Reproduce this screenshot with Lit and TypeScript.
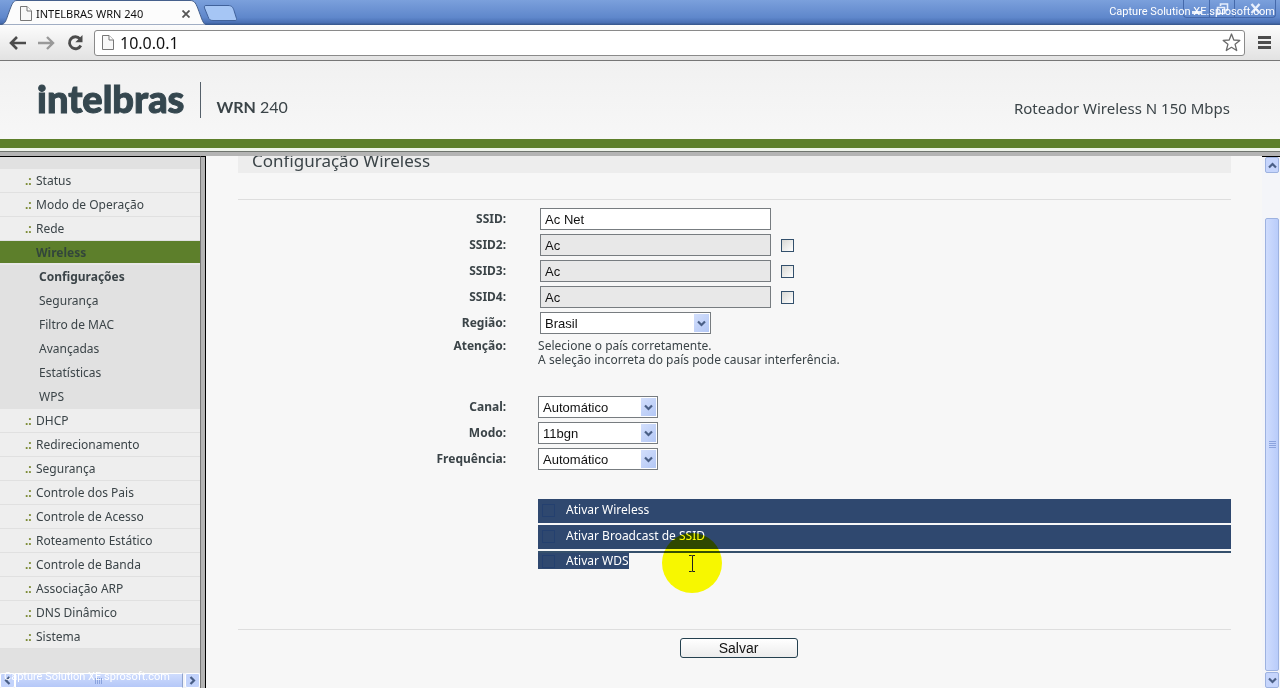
import { LitElement, html, css } from "lit";
import { customElement } from "lit/decorators.js";
import { classMap } from "lit/directives/class-map.js";

const SUB = ["Configurações", "Segurança", "Filtro de MAC", "Avançadas", "Estatísticas", "WPS"];
const TOP = ["Status", "Modo de Operação", "Rede"];
const REST = ["DHCP", "Redirecionamento", "Segurança", "Controle dos Pais", "Controle de Acesso", "Roteamento Estático", "Controle de Banda", "Associação ARP", "DNS Dinâmico", "Sistema"];

const pageIcon = html`<svg class="page" width="12" height="15" viewBox="0 0 12 15" aria-hidden="true">
  <path d="M.5.5h6.5l4.500 4.500v9.500H.5z" fill="#f8f8f8" stroke="#777" /><path d="M7 .5v4.500h4.500" fill="#fff" stroke="#777" /></svg>`;

const chevron = (d: string) => html`<svg width="9" height="9" viewBox="0 0 9 9" aria-hidden="true">
  <path d=${d} fill="none" stroke="#4a5f86" stroke-width="2.200" /></svg>`;
const DOWN = "M1 2.500 4.500 6 8 2.500";
const UP = "M1 6.500 4.500 3 8 6.500";
const LEFT = "M6.500 1 3 4.500 6.500 8";
const RIGHT = "M2.500 1 6 4.500 2.500 8";

@customElement("browser-bar")
export class BrowserBar extends LitElement {
  static styles = css`
    :host { display: block; font-family: "Noto Sans", sans-serif; }
    .title { display: flex; align-items: flex-start; height: 25px; background: linear-gradient(#7ba0dc, #5f87cb 70%, #4a70b4 90%, #345488); position: relative; }
    .tab { display: grid; width: 206px; height: 25px; }
    .tab > * { grid-area: 1 / 1; }
    .label { display: flex; align-items: center; padding: 2px 16px 0 20px; font-size: 11px; gap: 4px; color: #111; }
    .name { flex: 1; white-space: nowrap; }
    button { border: 0; padding: 0; background: none; display: flex; align-items: center; justify-content: center; }
    .new { margin: 5px 0 0 -3px; }
    .windows { display: flex; margin-left: auto; margin-right: 4px; height: 17px; border: 1px solid #4569aa; border-top: 0; border-radius: 0 0 4px 4px; }
    .windows button { width: 25px; }
    .windows button + button { border-left: 1px solid #4569aa; }
    .windows .close { width: 41px; }
    .mark { position: absolute; right: 5px; top: 4px; font: 11px/16px Roboto, sans-serif; color: #fff; }
    .tools { display: flex; align-items: center; height: 35px; padding: 0 8px 0 9px; background: linear-gradient(#fcfcfc, #e2e2e2); border-bottom: 1px solid #777; }
    .tools > button { width: 17px; margin-right: 12px; }
    .tools > .reload { margin-right: 10px; }
    .box { flex: 1; display: flex; align-items: center; height: 26px; border: 1px solid #8a8a8a; border-radius: 3px; background: #fff; box-sizing: border-box; padding: 0 3px 0 7px; gap: 6px; }
    input { flex: 1; border: 0; padding: 0; outline: 0; background: none; font: 16px "Noto Sans", sans-serif; color: #111; }
    .tools > .menu { margin: 0 0 0 13px; width: 14px; }
  `;
  render() {
    return html`
      <div class="title">
        <div class="tab">
          <svg width="206" height="25" viewBox="0 0 206 25" aria-hidden="true">
            <path d="M0 25C6 24 6 20 9 12S13 .5 17 .5H190c5 0 6 3 9 11s4 12 7 13.500z" fill="#fcfcfc" stroke="#46608c" /></svg>
          <div class="label">${pageIcon}<span class="name">INTELBRAS WRN 240</span>
            <button aria-label="Fechar guia"><svg width="8" height="8" viewBox="0 0 8 8"><path d="M.5.5l7 7M7.500.5l-7 7" stroke="#555" stroke-width="1.800" /></svg></button>
          </div>
        </div>
        <button class="new" aria-label="Nova guia"><svg width="34" height="16" viewBox="0 0 34 16"><path d="M3 .5h22c4 0 5 2 6 5l2.500 8c.5 1.500 0 2-1.500 2H10c-3 0-4-1-5-4L1.500 3C1 1.500 1.500.5 3 .5z" fill="#a6c6f5" stroke="#41629b" /></svg></button>
        <div class="windows">
          <button aria-label="Minimizar"><svg width="12" height="12" viewBox="0 0 12 12"><path d="M1 9.500h9" stroke="#e6eefc" stroke-width="3" /></svg></button>
          <button aria-label="Restaurar"><svg width="13" height="12" viewBox="0 0 13 12"><path d="M4.500 3V1h7v6h-2M1.500 4.500h7v6h-7z" fill="none" stroke="#e6eefc" stroke-width="1.600" /></svg></button>
          <button class="close" aria-label="Fechar"><svg width="11" height="11" viewBox="0 0 11 11"><path d="M1.500 1l8 9M9.500 1l-8 9" stroke="#e6eefc" stroke-width="2.400" /></svg></button>
        </div>
        <span class="mark">Capture Solution XE.sprosoft.com</span>
      </div>
      <div class="tools">
        <button aria-label="Voltar"><svg width="17" height="14" viewBox="0 0 17 14"><path d="M8 1 2 7l6 6M2 7h15" fill="none" stroke="#4c4c4c" stroke-width="2.600" /></svg></button>
        <button aria-label="Avançar"><svg width="17" height="14" viewBox="0 0 17 14"><path d="M9 1l6 6-6 6M15 7H0" fill="none" stroke="#999" stroke-width="2.400" /></svg></button>
        <button class="reload" aria-label="Recarregar"><svg width="17" height="16" viewBox="0 0 17 16"><path d="M13 3.800A6 6 0 1 0 13.800 10.500" fill="none" stroke="#4c4c4c" stroke-width="2.800" /><path d="M15.500 0v7.200H8.300z" fill="#4c4c4c" /></svg></button>
        <div class="box">${pageIcon}<input aria-label="Endereço" value="10.0.0.1" />
          <button aria-label="Favoritos"><svg width="19" height="19" viewBox="0 0 19 19"><path d="M9.500 1l2.300 6 6 .4-4.700 3.900 1.600 6.200-5.200-3.200-5.200 3.200 1.600-6.200L1.200 7.400l6-.4z" fill="#fff" stroke="#6a6a6a" stroke-width="1.300" stroke-linejoin="round" /></svg></button>
        </div>
        <button class="menu" aria-label="Menu"><svg width="14" height="13" viewBox="0 0 14 13"><path d="M0 1.500h13M0 6.500h13M0 11.500h13" stroke="#4c4c4c" stroke-width="3" /></svg></button>
      </div>`;
  }
}

@customElement("side-menu")
export class SideMenu extends LitElement {
  static styles = css`
    :host { display: flex; flex-direction: column; width: 200px; background: #e1e1e1; font: 12px/23px "Noto Sans", sans-serif; overflow: hidden; }
    ul { list-style: none; margin: 0; padding: 12px 0 0; flex: 1; }
    a { display: block; height: 23px; padding-left: 25px; border-bottom: 1px solid #e0e0e0; background: #eee; color: #3b4448; text-decoration: none; white-space: nowrap; }
    .dots { color: #7b8a33; font-weight: bold; display: inline-block; width: 11px; }
    .current { height: 22px; border-bottom: 2px solid #e8e8e8; background: #5d7f2b; color: #33463b; font-weight: bold; padding-left: 36px; }
    .sub { background: #e1e1e1; border-color: #e1e1e1; padding-left: 39px; }
    .on { font-weight: bold; }
    .bar { display: flex; height: 15px; background: #f1f2f8; position: relative; }
    .bar button { width: 15px; padding: 0; border: 1px solid #fff; border-radius: 2px; background: #c3d3fb; display: flex; align-items: center; justify-content: center; }
    .thumb { flex: 1; background: linear-gradient(#cfdcfd, #b5c8f8); border: 1px solid #fff; border-right-color: #8fa3cc; margin-right: 2px; display: flex; align-items: center; justify-content: center; }
    .mark { position: absolute; left: 4px; top: -4px; font: 11px/16px Roboto, sans-serif; color: #fff; white-space: nowrap; }
  `;
  private item(name: string) {
    return html`<li><a href="#"><span class="dots">.:</span>${name}</a></li>`;
  }
  render() {
    return html`<ul>
        ${TOP.map((n) => this.item(n))}
        <li><a class="current" href="#">Wireless</a></li>
        ${SUB.map((n, i) => html`<li><a class=${classMap({ sub: true, on: i === 0 })} href="#">${n}</a></li>`)}
        ${REST.map((n) => this.item(n))}
      </ul>
      <div class="bar">
        <button aria-label="Rolar à esquerda">${chevron(LEFT)}</button>
        <div class="thumb"><svg width="8" height="6" viewBox="0 0 8 6"><path d="M.5 0v6M2.500 0v6M4.500 0v6M6.500 0v6" stroke="#8ba3dd" /></svg></div>
        <button aria-label="Rolar à direita">${chevron(RIGHT)}</button>
        <span class="mark">Capture Solution XE.sprosoft.com</span>
      </div>`;
  }
}

@customElement("wireless-form")
export class WirelessForm extends LitElement {
  static styles = css`
    :host { display: block; flex: 1; min-width: 0; overflow: hidden; padding: 0 31px 0 32px; background: #f7f7f7; color: #3b4448; font: 12px/14px "Noto Sans", sans-serif; }
    h1 { margin: -8px 0 26px; padding-left: 14px; height: 25px; background: #ededed; font-size: 17px; line-height: 26px; font-weight: normal; }
    form { border-top: 1px solid #dedede; padding-top: 8px; }
    .row { display: grid; grid-template-columns: 27% 1fr; column-gap: 32px; align-items: center; margin-bottom: 4px; }
    .name { text-align: right; font-weight: bold; font-size: 12px; }
    .field { display: flex; align-items: center; gap: 10px; }
    .inset { padding-left: 2px; }
    .text { box-sizing: border-box; width: 231px; height: 22px; padding: 0 4px; border: 1px solid #777c80; background: #fff; font: 13px "Liberation Sans", sans-serif; color: #111; }
    .text:disabled { background: #e8e8e8; }
    .tick { appearance: none; box-sizing: border-box; width: 13px; height: 13px; margin: 0; border: 1px solid #33506c; background: linear-gradient(135deg, #d8d8d4, #fff); }
    .drop { display: grid; width: 120px; align-items: center; }
    .drop > * { grid-area: 1 / 1; }
    .wide { width: 171px; }
    select { appearance: none; box-sizing: border-box; width: 100%; height: 22px; padding: 0 4px; border: 1px solid #777c80; border-radius: 0; background: #fff; font: 13px "Liberation Sans", sans-serif; color: #111; }
    .arrow { justify-self: end; margin-right: 2px; width: 15px; height: 18px; background: linear-gradient(135deg, #d3dffc, #b3c7f5); display: flex; align-items: center; justify-content: center; pointer-events: none; }
    .note { align-items: start; margin: 5px 0 29px; }
    p { margin: 0; }
    .picks { margin: 29px 0 60px; padding-left: calc(27% + 32px); }
    .pick { display: flex; align-items: center; gap: 11px; height: 24px; box-sizing: border-box; padding: 0 4px 2px; margin-bottom: 2px; background: #2f486f; color: #fff; }
    .pick .tick { background: none; border-color: #24406f; }
    .last { border-top: 2px solid #35506c; height: 18px; background: none; padding: 0; margin: 0; }
    .last label { display: flex; align-items: center; gap: 11px; height: 16px; padding-left: 4px; background: #2f486f; }
    .end { border-top: 1px solid #dedede; padding: 8px 0 0 8px; text-align: center; }
    .save { width: 118px; height: 20px; padding: 0; border: 1px solid #24404f; border-radius: 3px; background: linear-gradient(#fff, #ececec); font: 14px "Liberation Sans", sans-serif; color: #111; }
  `;
  private select(id: string, label: string, value: string, wide = false) {
    return html`<div class="row"><label class="name" for=${id}>${label}</label>
      <div class=${classMap({ field: true, inset: wide })}><div class=${classMap({ drop: true, wide })}>
        <select id=${id}><option>${value}</option></select><span class="arrow">${chevron(DOWN)}</span></div></div></div>`;
  }
  render() {
    return html`<h1>Configuração Wireless</h1>
      <form @submit=${(e: Event) => e.preventDefault()}>
        <div class="row"><label class="name" for="s1">SSID:</label>
          <div class="field inset"><input class="text" id="s1" value="Ac Net" /></div></div>
        ${[2, 3, 4].map((n) => html`<div class="row"><label class="name" for="s${n}">SSID${n}:</label>
          <div class="field inset"><input class="text" id="s${n}" value="Ac" disabled /><input class="tick" type="checkbox" aria-label="Ativar SSID${n}" /></div></div>`)}
        ${this.select("region", "Região:", "Brasil", true)}
        <div class="row note"><span class="name">Atenção:</span>
          <p>Selecione o país corretamente.<br />A seleção incorreta do país pode causar interferência.</p></div>
        ${this.select("canal", "Canal:", "Automático")}
        ${this.select("modo", "Modo:", "11bgn")}
        ${this.select("freq", "Frequência:", "Automático")}
        <div class="picks">
          <label class="pick"><input class="tick" type="checkbox" />Ativar Wireless</label>
          <label class="pick"><input class="tick" type="checkbox" />Ativar Broadcast de SSID</label>
          <div class="pick last"><label><input class="tick" type="checkbox" />Ativar WDS</label></div>
        </div>
        <div class="end"><button class="save">Salvar</button></div>
      </form>`;
  }
}

@customElement("app-root")
export class AppRoot extends LitElement {
  static styles = css`
    :host { display: flex; flex-direction: column; height: 100vh; overflow: hidden; position: relative; background: #f7f7f7; }
    header { display: flex; align-items: flex-end; box-sizing: border-box; height: 78px; padding: 0 50px 21px 37px; background: linear-gradient(#f1f1f1, #f7f7f7); color: #3b4448; font-family: "Noto Sans", sans-serif; }
    .logo { font: 900 38px/40px Lato, sans-serif; color: #35474f; -webkit-text-stroke: 1px #35474f; }
    .model { margin-left: 16px; padding-left: 15px; border-left: 1px solid #55606a; height: 36px; font: 16px/50px Lato, sans-serif; }
    .product { margin-left: auto; font-size: 15px; line-height: 20px; }
    .green { height: 9px; background: #5d7f2b; border-bottom: 3px solid #eef3ea; }
    .edge { height: 4px; border-top: 1px solid #70756f; background: #b4b4b4; }
    .body { flex: 1; display: flex; min-height: 0; }
    side-menu { border-top: 1px solid #000; }
    .split { width: 4px; border: solid #000; border-width: 1px 1px 0 0; border-left: 1px solid #777; background: #b4b4b4; }
    .scroll { display: flex; flex-direction: column; width: 14px; padding: 0 1px 0 3px; border-top: 1px solid #000; background: #f4f5f9; }
    .scroll button { height: 16px; padding: 0; border: 1px solid #9db2e0; border-radius: 2px; background: #c6d5fc; display: flex; align-items: center; justify-content: center; }
    .thumb { flex: 1; margin: 45px 0 1px; border: 1px solid #9db2e0; border-radius: 2px; background: linear-gradient(90deg, #cfdcfd, #b9ccfa); display: flex; align-items: center; justify-content: center; }
    .pointer { position: absolute; left: 662px; top: 533px; mix-blend-mode: multiply; pointer-events: none; }
  `;
  render() {
    return html`<browser-bar></browser-bar>
      <header><span class="logo">intelbras</span><span class="model"><b>WRN</b> 240</span><span class="product">Roteador Wireless N 150 Mbps</span></header>
      <div class="green"></div><div class="edge"></div>
      <div class="body">
        <side-menu></side-menu><div class="split"></div>
        <wireless-form></wireless-form>
        <div class="scroll">
          <button aria-label="Rolar para cima">${chevron(UP)}</button>
          <div class="thumb"><svg width="7" height="8" viewBox="0 0 7 8"><path d="M0 .5h7M0 2.500h7M0 4.500h7M0 6.500h7" stroke="#8ba3dd" /></svg></div>
          <button aria-label="Rolar para baixo">${chevron(DOWN)}</button>
        </div>
      </div>
      <svg class="pointer" width="60" height="60" viewBox="0 0 60 60" aria-hidden="true"><circle cx="30" cy="30" r="30" fill="#ff0" />
        <path d="M27 22.500h2.500l.5.5.5-.5H33M27 38.500h2.500l.5-.5.5.5H33M30.500 23v15" fill="none" stroke="#222" stroke-width="1" /></svg>`;
  }
}
